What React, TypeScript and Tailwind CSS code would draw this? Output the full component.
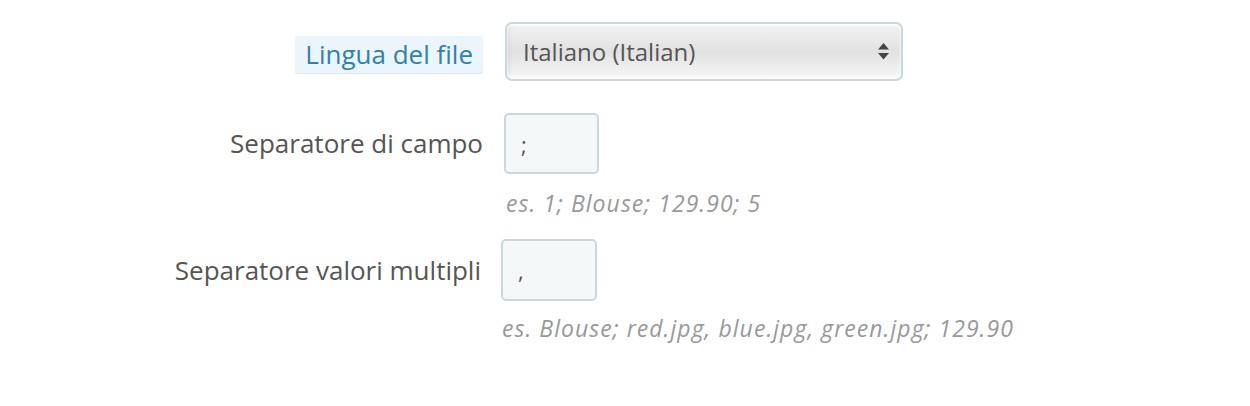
import { useState } from "react";

function SortArrows() {
    return (
        <svg width="11" height="17" viewBox="0 0 11 17" className="text-[#444]">
            <path d="M5.5 0 L11 6.5 L0 6.5 Z" fill="currentColor" />
            <path d="M0 10 L11 10 L5.5 16.5 Z" fill="currentColor" />
        </svg>
    );
}

export default function App() {
    const [lang, setLang] = useState("it");
    const [fieldSep, setFieldSep] = useState(";");
    const [multiSep, setMultiSep] = useState(",");

    return (
        <div className="min-h-screen bg-white pt-[22px] font-['Open_Sans',sans-serif] text-[#555]">
            {/* Lingua del file */}
            <div className="flex items-start">
                <div className="w-[483px] flex justify-end pt-[14px]">
                    <span className="h-[37px] px-[10px] flex items-center rounded-[3px] bg-[#ebf5fb] shadow-[0_1px_0_#d7e8f1] text-[26px] text-[#2f83a9]">
                        Lingua del file
                    </span>
                </div>
                <div className="ml-[22px] relative">
                    <select
                        value={lang}
                        onChange={(e) => setLang(e.target.value)}
                        className="appearance-none w-[398px] h-[59px] pl-[16px] pr-[40px] rounded-[7px] border-2 border-[#c9d8dd] bg-gradient-to-b from-[#f2f2f2] via-[#e2e2e2] to-[#f6f6f6] shadow-[inset_0_2px_2px_rgba(255,255,255,0.9),inset_0_-3px_3px_rgba(255,255,255,0.8),inset_3px_0_4px_rgba(0,0,0,0.06)] text-[24px] text-[#555] outline-none"
                    >
                        <option value="it">Italiano (Italian)</option>
                        <option value="en">English (English)</option>
                    </select>
                    <div className="absolute right-[14px] top-[21px] pointer-events-none">
                        <SortArrows />
                    </div>
                </div>
            </div>

            {/* Separatore di campo */}
            <div className="flex items-center mt-[32px]">
                <label className="w-[483px] text-right text-[26px]">Separatore di campo</label>
                <input
                    value={fieldSep}
                    onChange={(e) => setFieldSep(e.target.value)}
                    className="ml-[21px] w-[95px] h-[61px] px-[15px] rounded-[5px] border-2 border-[#c9d8dd] bg-[#f5f8f9] text-[22px] text-[#555] outline-none"
                />
            </div>
            <p className="ml-[506px] mt-[14px] leading-[30px] italic text-[23px] tracking-[1.05px] text-[#999]">
                es. 1; Blouse; 129.90; 5
            </p>

            {/* Separatore valori multipli */}
            <div className="flex items-center mt-[21px]">
                <label className="w-[481px] text-right text-[26px]">Separatore valori multipli</label>
                <input
                    value={multiSep}
                    onChange={(e) => setMultiSep(e.target.value)}
                    className="ml-[20px] w-[96px] h-[62px] px-[15px] rounded-[5px] border-2 border-[#c9d8dd] bg-[#f5f8f9] text-[22px] text-[#555] outline-none"
                />
            </div>
            <p className="ml-[502px] mt-[12px] leading-[30px] italic text-[23px] tracking-[1.05px] text-[#999]">
                es. Blouse; red.jpg, blue.jpg, green.jpg; 129.90
            </p>
        </div>
    );
}
